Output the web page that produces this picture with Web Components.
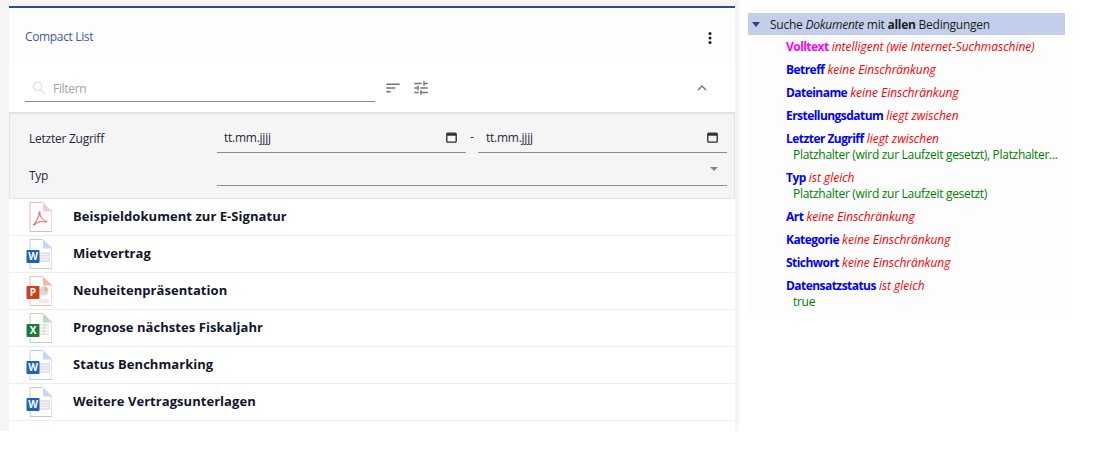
<!DOCTYPE html>
<html>
<head>
<meta charset="utf-8">
<style>
html, body { margin: 0; height: 100%; background: #ffffff; overflow: hidden; }
body { display: flex; align-items: flex-start; font-family: "Open Sans", "Noto Sans", sans-serif; }
</style>
</head>
<body>
<doc-shell>
    <doc-card slot="left" heading="Compact List">
        <filter-bar></filter-bar>
        <filter-panel></filter-panel>
        <doc-row kind="pdf">Beispieldokument zur E-Signatur</doc-row>
        <doc-row kind="word">Mietvertrag</doc-row>
        <doc-row kind="ppt">Neuheitenpräsentation</doc-row>
        <doc-row kind="excel">Prognose nächstes Fiskaljahr</doc-row>
        <doc-row kind="word">Status Benchmarking</doc-row>
        <doc-row kind="word">Weitere Vertragsunterlagen</doc-row>
    </doc-card>
    <cond-tree slot="right">
        <cond-item field="Volltext" op="intelligent (wie Internet-Suchmaschine)" accent></cond-item>
        <cond-item field="Betreff" op="keine Einschränkung"></cond-item>
        <cond-item field="Dateiname" op="keine Einschränkung"></cond-item>
        <cond-item field="Erstellungsdatum" op="liegt zwischen"></cond-item>
        <cond-item field="Letzter Zugriff" op="liegt zwischen">Platzhalter (wird zur Laufzeit gesetzt), Platzhalter...</cond-item>
        <cond-item field="Typ" op="ist gleich">Platzhalter (wird zur Laufzeit gesetzt)</cond-item>
        <cond-item field="Art" op="keine Einschränkung"></cond-item>
        <cond-item field="Kategorie" op="keine Einschränkung"></cond-item>
        <cond-item field="Stichwort" op="keine Einschränkung"></cond-item>
        <cond-item field="Datensatzstatus" op="ist gleich">true</cond-item>
    </cond-tree>
</doc-shell>

<script>
class DocShell extends HTMLElement
{
    constructor()
    {
        super();
        this.shadowDOM = this.attachShadow({mode:"open"});
    }

    connectedCallback()
    {
        this.shadowDOM.innerHTML =
        `
        <style>
            :host
            {
                display     : flex;
                flex        : 1;
                align-items : flex-start;
            }
            .left
            {
                width       : 739px;
                height      : 431px;
                box-sizing  : border-box;
                padding     : 6px 4px 0 9px;
                background  : #f5f5f5;
                flex        : none;
            }
            .right
            {
                margin-left : 9px;
                padding-top : 13px;
                width       : 317px;
                flex        : none;
            }
        </style>
        <div class="left"><slot name="left"></slot></div>
        <div class="right"><slot name="right"></slot></div>`;
    }
}

class DocCard extends HTMLElement
{
    constructor()
    {
        super();
        this.shadowDOM = this.attachShadow({mode:"open"});
    }

    connectedCallback()
    {
        this.shadowDOM.innerHTML =
        `
        <style>
            :host
            {
                display     : block;
                height      : 425px;
                box-sizing  : border-box;
                background  : #ffffff;
                border-top  : 2px solid #2b4a9e;
            }
            .head
            {
                height          : 56px;
                display         : flex;
                align-items     : center;
                justify-content : space-between;
                padding         : 0 16px 0 16px;
                background      : #fdfdfd;
            }
            .title
            {
                font-size       : 12px;
                letter-spacing  : -0.35px;
                color           : #3f5aa6;
            }
            svg { display: block; margin-top: 4px; }
        </style>
        <div class="head">
            <span class="title">${this.getAttribute("heading")}</span>
            <svg width="18" height="18" viewBox="0 0 24 24" fill="#1a1a1a"><circle cx="12" cy="6" r="2"/><circle cx="12" cy="12" r="2"/><circle cx="12" cy="18" r="2"/></svg>
        </div>
        <slot></slot>`;
    }
}

class FilterBar extends HTMLElement
{
    constructor()
    {
        super();
        this.shadowDOM = this.attachShadow({mode:"open"});
    }

    connectedCallback()
    {
        this.shadowDOM.innerHTML =
        `
        <style>
            :host
            {
                display     : flex;
                align-items : flex-start;
                height      : 48px;
                box-sizing  : border-box;
                padding     : 7px 0 0 16px;
            }
            .field
            {
                width       : 350px;
                height      : 31px;
                box-sizing  : border-box;
                border-bottom: 1px solid #8c8c8c;
                display     : flex;
                align-items : center;
                gap         : 7px;
                padding     : 4px 0 0 7px;
                font-size   : 12px;
                letter-spacing: -0.3px;
                color       : #a3a3a3;
            }
            .tools
            {
                display     : flex;
                gap         : 10px;
                margin-left : 9px;
                padding-top : 8px;
            }
            .collapse { margin-left: 263px; padding-top: 8px; }
            svg { display: block; }
        </style>
        <div class="field">
            <svg width="14" height="14" viewBox="0 0 14 14" fill="none" stroke="#e2e2e2" stroke-width="1.4"><circle cx="5.5" cy="5.5" r="4.2"/><path d="M8.6 8.6 L13 13"/></svg>
            <span>Filtern</span>
        </div>
        <div class="tools">
            <svg width="18" height="18" viewBox="0 0 24 24" fill="#757575"><path d="M3 18h6v-2H3v2zM3 6v2h18V6H3zm0 7h12v-2H3v2z"/></svg>
            <svg width="18" height="18" viewBox="0 0 24 24" fill="#757575"><path d="M3 17v2h6v-2H3zM3 5v2h10V5H3zm10 16v-2h8v-2h-8v-2h-2v6h2zM7 9v2H3v2h4v2h2V9H7zm14 4v-2H11v2h10zm-6-4h2V7h4V5h-4V3h-2v6z"/></svg>
        </div>
        <div class="collapse">
            <svg width="18" height="18" viewBox="0 0 24 24" fill="#757575"><path d="M12 8l-6 6 1.41 1.41L12 10.83l4.59 4.58L18 14z"/></svg>
        </div>`;
    }
}

class FilterPanel extends HTMLElement
{
    constructor()
    {
        super();
        this.shadowDOM = this.attachShadow({mode:"open"});
    }

    connectedCallback()
    {
        const calendar = `<svg width="11" height="11" viewBox="0 0 11 11" fill="none" stroke="#2a2a2a" stroke-width="1.3"><rect x="0.8" y="1.2" width="9.4" height="9" rx="1"/><path d="M0.8 2.6h9.4" stroke-width="2.2"/></svg>`;

        this.shadowDOM.innerHTML =
        `
        <style>
            :host
            {
                display     : block;
                height      : 87px;
                box-sizing  : border-box;
                background  : #f5f5f5;
                border      : 1px solid #e4e4e4;
                border-top  : 1px solid #e0e0e0;
                box-shadow  : inset 0 2px 2px -1px #e2e2e2;
                padding     : 9px 7px 0 0;
                font-size   : 12px;
                letter-spacing: -0.25px;
                color       : #252a3a;
            }
            .row
            {
                display     : flex;
                align-items : flex-start;
                height      : 31px;
            }
            .row + .row { margin-top: 5px; }
            .label
            {
                width       : 207px;
                padding-left: 19px;
                box-sizing  : border-box;
                line-height : 34px;
                flex        : none;
            }
            .row + .row .label { line-height: 36px; }
            .input
            {
                box-sizing  : border-box;
                height      : 31px;
                border-bottom: 1px solid #8c8c8c;
                display     : flex;
                align-items : center;
                justify-content: space-between;
                padding     : 0 9px 0 7px;
            }
            .date { width: 249px; }
            .date + .dash + .date { padding-left: 8px; }
            .date svg { margin-top: 1px; }
            .dash { width: 12px; text-align: center; line-height: 30px; flex: none; }
            .wide { flex: 1; height: 28px; }
            .arrow
            {
                width       : 0;
                height      : 0;
                border      : 4px solid transparent;
                border-top  : 4px solid #858585;
                border-bottom: 0;
                margin-top  : -5px;
            }
            svg { display: block; }
        </style>
        <div class="row">
            <div class="label">Letzter Zugriff</div>
            <div class="input date"><span>tt.mm.jjjj</span>${calendar}</div>
            <div class="dash">-</div>
            <div class="input date"><span>tt.mm.jjjj</span>${calendar}</div>
        </div>
        <div class="row">
            <div class="label">Typ</div>
            <div class="input wide"><span></span><span class="arrow"></span></div>
        </div>`;
    }
}

class FileIcon extends HTMLElement
{
    constructor()
    {
        super();
        this.shadowDOM = this.attachShadow({mode:"open"});
    }

    connectedCallback()
    {
        const name = this.getAttribute("kind");
        const kinds =
        {
            pdf   : { line: "#eab7b5", fold: "#f3cfcd" },
            word  : { line: "#b9cdeb", fold: "#c5d7f1", badge: "#1f5fbf", letter: "W", top: 11 },
            ppt   : { line: "#f2c2b0", fold: "#f3b9a1", badge: "#c8421c", letter: "P", top: 10 },
            excel : { line: "#b5d8b9", fold: "#b9dcbd", badge: "#217a3c", letter: "X", top: 11 }
        };
        const kind = kinds[name];
        let inner = "";

        if (name == "pdf")
        {
            inner = `<path d="M7.5 22.5C10 21 13.5 14 13 10.5C13 9.5 14.3 9.7 14 11C13.5 14 16 18 20.5 19C21.5 19.5 20.5 20.5 19.5 20C16 18.5 11 19.5 8.5 23C7.5 23.5 7 23 7.5 22.5Z" fill="none" stroke="#e08580" stroke-width="1.2"/>`;
        }
        else if (name == "word")
        {
            inner = `<rect x="13" y="13" width="11" height="10" fill="#e4e4e4"/><path d="M14 15.5h9M14 18h9M14 20.5h9" stroke="#f4f4f4"/>`;
        }
        else if (name == "ppt")
        {
            inner = `<circle cx="18" cy="15" r="4.5" fill="#d9d9d9"/><path d="M18 15v-4.5a4.5 4.5 0 0 1 4.5 4.5z" fill="#f0b49b"/><path d="M13 24h10M13 26h10" stroke="#d9d9d9"/>`;
        }
        else
        {
            inner = `<path d="M14 12h9M14 15h9M14 18h9M14 21h9M18 11v11" stroke="#cfd8cf"/>`;
        }

        const badge = kind.badge ? `<rect x="0.5" y="${kind.top}" width="13" height="13" rx="1" fill="${kind.badge}"/>` : "";
        const letter = kind.letter ? `<span class="letter" style="top:${kind.top}px">${kind.letter}</span>` : "";

        this.shadowDOM.innerHTML =
        `
        <style>
            :host
            {
                display     : block;
                position    : relative;
                width       : 26px;
                height      : 30px;
                flex        : none;
            }
            svg { display: block; }
            .letter
            {
                position    : absolute;
                left        : 0.5px;
                width       : 13px;
                height      : 13px;
                line-height : 13px;
                text-align  : center;
                font-size   : 10px;
                font-weight : 700;
                color       : #ffffff;
            }
        </style>
        <svg width="26" height="30" viewBox="0 0 26 30">
            <path d="M4 .5h12.5L26 9.5v20H4Z" fill="#ffffff" stroke="${kind.line}"/>
            <path d="M17 .5V9.5h9Z" fill="${kind.fold}"/>
            ${inner}
            ${badge}
        </svg>
        ${letter}`;
    }
}

class DocRow extends HTMLElement
{
    constructor()
    {
        super();
        this.shadowDOM = this.attachShadow({mode:"open"});
    }

    connectedCallback()
    {
        this.shadowDOM.innerHTML =
        `
        <style>
            :host
            {
                display     : flex;
                align-items : center;
                height      : 37px;
                box-sizing  : border-box;
                border-bottom: 1px solid #eeeeee;
                padding-left: 17px;
            }
            .name
            {
                margin-left : 21px;
                font-size   : 13px;
                font-weight : 700;
                letter-spacing: 0.05px;
                color       : #11162b;
                position    : relative;
                top         : -1px;
            }
        </style>
        <file-icon kind="${this.getAttribute("kind")}"></file-icon>
        <span class="name"><slot></slot></span>`;
    }
}

class CondTree extends HTMLElement
{
    constructor()
    {
        super();
        this.shadowDOM = this.attachShadow({mode:"open"});
    }

    connectedCallback()
    {
        this.shadowDOM.innerHTML =
        `
        <style>
            :host
            {
                display     : block;
                background  : #fdfdfd;
                font-size   : 12px;
                padding-bottom: 4px;
            }
            .root
            {
                height      : 22px;
                background  : #c3cfea;
                display     : flex;
                align-items : center;
                color       : #1c1c1c;
                letter-spacing: -0.25px;
            }
            .arrow
            {
                width       : 0;
                height      : 0;
                border      : 4px solid transparent;
                border-top  : 5px solid #33418a;
                border-bottom: 0;
                margin      : 0 10px 0 4px;
            }
            .items { padding: 1px 0 0 38px; }
        </style>
        <div class="root"><span class="arrow"></span><span>Suche <i>Dokumente</i> mit <b>allen</b> Bedingungen</span></div>
        <div class="items"><slot></slot></div>`;
    }
}

class CondItem extends HTMLElement
{
    constructor()
    {
        super();
        this.shadowDOM = this.attachShadow({mode:"open"});
    }

    connectedCallback()
    {
        this.shadowDOM.innerHTML =
        `
        <style>
            :host
            {
                display     : block;
                line-height : 16px;
                padding     : 3px 0 4px;
            }
            b
            {
                color       : ${this.hasAttribute("accent") ? "#ff00ff" : "#0000ff"};
                letter-spacing: -0.55px;
            }
            i { color: #ff0000; letter-spacing: -0.03px; }
            .value
            {
                display     : block;
                color       : #008000;
                padding-left: 7px;
                letter-spacing: -0.3px;
                white-space : nowrap;
            }
        </style>
        <b>${this.getAttribute("field")}</b> <i>${this.getAttribute("op")}</i>
        ${this.textContent.trim() ? `<span class="value"><slot></slot></span>` : ""}`;
    }
}

customElements.define("doc-shell",DocShell);
customElements.define("doc-card",DocCard);
customElements.define("filter-bar",FilterBar);
customElements.define("filter-panel",FilterPanel);
customElements.define("file-icon",FileIcon);
customElements.define("doc-row",DocRow);
customElements.define("cond-tree",CondTree);
customElements.define("cond-item",CondItem);
</script>
</body>
</html>
